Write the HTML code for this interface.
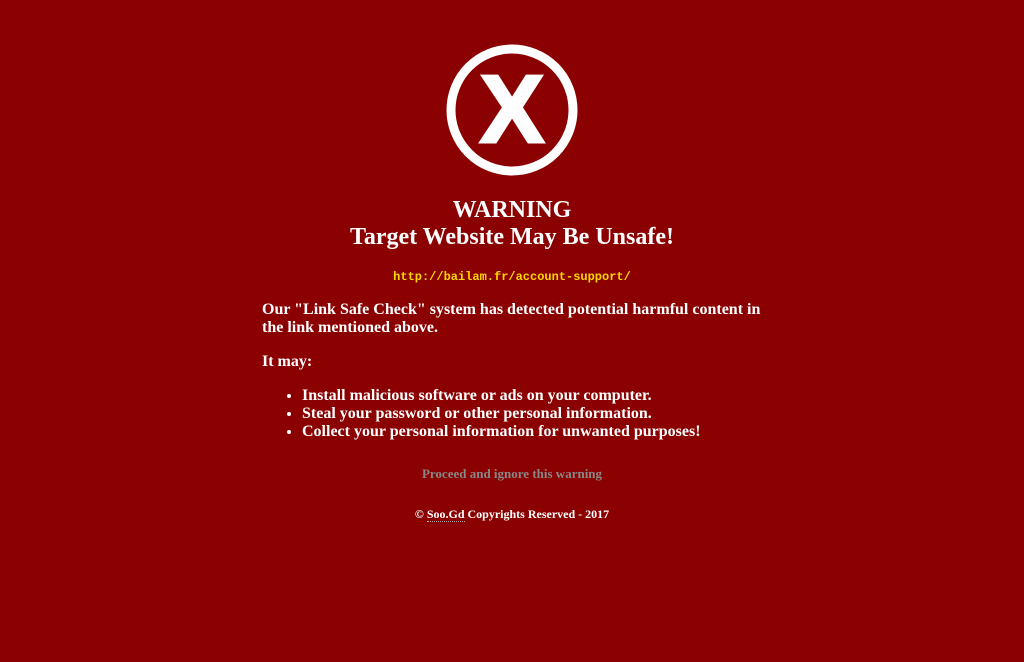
<!DOCTYPE html>
<html><head><meta charset="utf-8"><style>
body{margin:0;background:#8b0000;width:1024px;height:662px;overflow:hidden;font-family:"Liberation Serif",serif;color:#fff;font-weight:bold}
.h{position:absolute;left:0;width:1024px;text-align:center;font-size:24px;line-height:28px}
.url{position:absolute;left:0;width:1024px;text-align:center;top:270px;font:bold 12px "Liberation Mono",monospace;color:#ffd700}
.body{position:absolute;left:262px;width:505px;top:301px;font-size:16px;line-height:18px}
p{margin:0}
ul{margin:0;padding-left:40px}
</style></head><body>
<svg style="position:absolute;left:445px;top:44px" width="134" height="134" viewBox="0 0 134 134">
<circle cx="67" cy="66" r="61" fill="none" stroke="#fff" stroke-width="9"/>
<text x="67" y="98" text-anchor="middle" font-family="Liberation Sans" font-weight="bold" font-size="96" fill="#fff" stroke="#fff" stroke-width="3">X</text>
</svg>
<div class="h" style="top:196px">WARNING</div>
<div class="h" style="top:223px">Target Website May Be Unsafe!</div>
<div class="url">http://bailam.fr/account-support/</div>
<div class="body">
<p>Our "Link Safe Check" system has detected potential harmful content in the link mentioned above.</p>
<p style="margin-top:16px">It may:</p>
<ul style="margin-top:16px">
<li>Install malicious software or ads on your computer.</li>
<li>Steal your password or other personal information.</li>
<li>Collect your personal information for unwanted purposes!</li>
</ul>
</div>
<div style="position:absolute;left:0;width:1024px;text-align:center;top:466px;font-size:13px;color:#888">Proceed and ignore this warning</div>
<div style="position:absolute;left:0;width:1024px;text-align:center;top:507px;font-size:12px">© <span style="border-bottom:1px dotted #aaa">Soo.Gd</span> Copyrights Reserved - 2017</div>
</body></html>
